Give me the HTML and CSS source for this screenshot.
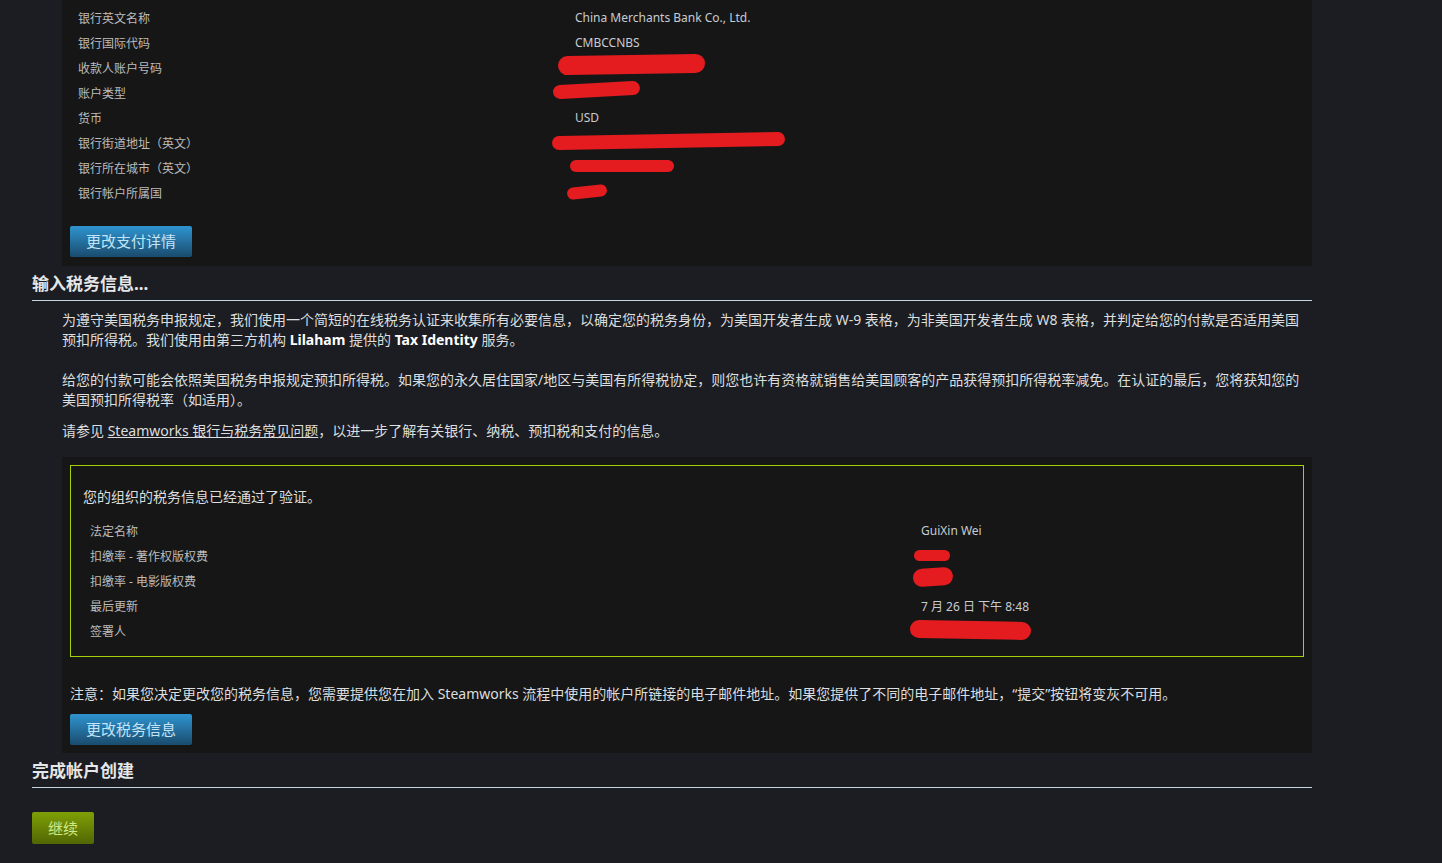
FILE: index.html
```html
<!DOCTYPE html>
<html lang="zh-CN">
<head>
    <meta charset="UTF-8">
    <meta name="viewport" content="width=device-width, initial-scale=1.0">
    <title>Steamworks 付款与税务信息</title>
    <link rel="stylesheet" href="styles.css">
</head>
<body>
    <div class="page">
        <div class="panel bank">
            <table class="details">
                <tr><td class="label">银行英文名称</td><td class="value">China Merchants Bank Co., Ltd.</td></tr>
                <tr><td class="label">银行国际代码</td><td class="value">CMBCCNBS</td></tr>
                <tr><td class="label">收款人账户号码</td><td class="value"><span class="redact r-account"></span></td></tr>
                <tr><td class="label">账户类型</td><td class="value"><span class="redact r-type"></span></td></tr>
                <tr><td class="label">货币</td><td class="value">USD</td></tr>
                <tr><td class="label">银行街道地址（英文）</td><td class="value"><span class="redact r-street"></span></td></tr>
                <tr><td class="label">银行所在城市（英文）</td><td class="value"><span class="redact r-city"></span></td></tr>
                <tr><td class="label">银行帐户所属国</td><td class="value"><span class="redact r-country"></span></td></tr>
            </table>
            <a class="btn btn-blue" href="#">更改支付详情</a>
        </div>

        <h2 class="section-title">输入税务信息...</h2>
        <div class="intro">
            <p class="gap-lg">为遵守美国税务申报规定，我们使用一个简短的在线税务认证来收集所有必要信息，以确定您的税务身份，为美国开发者生成 W-9 表格，为非美国开发者生成 W8 表格，并判定给您的付款是否适用美国预扣所得税。我们使用由第三方机构 <strong>Lilaham</strong> 提供的 <strong>Tax Identity</strong> 服务。</p>
            <p class="gap-sm">给您的付款可能会依照美国税务申报规定预扣所得税。如果您的永久居住国家/地区与美国有所得税协定，则您也许有资格就销售给美国顾客的产品获得预扣所得税率减免。在认证的最后，您将获知您的美国预扣所得税率（如适用）。</p>
            <p>请参见 <a href="#">Steamworks 银行与税务常见问题</a>，以进一步了解有关银行、纳税、预扣税和支付的信息。</p>
        </div>

        <div class="panel tax">
            <div class="verified">
                <p class="verified-title">您的组织的税务信息已经通过了验证。</p>
                <table class="details tax-details">
                    <tr><td class="label">法定名称</td><td class="value">GuiXin Wei</td></tr>
                    <tr><td class="label">扣缴率 - 著作权版权费</td><td class="value"><span class="redact r-rate1"></span></td></tr>
                    <tr><td class="label">扣缴率 - 电影版权费</td><td class="value"><span class="redact r-rate2"></span></td></tr>
                    <tr><td class="label">最后更新</td><td class="value">7 月 26 日 下午 8:48</td></tr>
                    <tr><td class="label">签署人</td><td class="value"><span class="redact r-signer"></span></td></tr>
                </table>
            </div>
            <p class="note">注意：如果您决定更改您的税务信息，您需要提供您在加入 Steamworks 流程中使用的帐户所链接的电子邮件地址。如果您提供了不同的电子邮件地址，“提交”按钮将变灰不可用。</p>
            <a class="btn btn-blue" href="#">更改税务信息</a>
        </div>

        <h2 class="section-title">完成帐户创建</h2>
        <a class="btn btn-green" href="#">继续</a>
    </div>
</body>
</html>
```

FILE: styles.css
```css
body {
    margin: 0;
    background: #1b1d22;
    color: #dcdedf;
    font-family: "Noto Sans", "Noto Sans CJK SC", sans-serif;
    font-size: 14px;
}
.page {
    width: 1280px;
    padding-left: 32px;
}
.panel {
    margin-left: 30px;
    background: #161616;
    padding: 8px;
}
.bank {
    padding-top: 5px;
    padding-bottom: 9px;
}

/* label / value rows */
.details {
    border-collapse: collapse;
    font-size: 12px;
}
.details td {
    height: 25px;
    padding: 0 8px;
    vertical-align: middle;
    white-space: nowrap;
}
.details .label {
    width: 481px;
    color: #bcbcbc;
}
.details .value {
    position: relative;
    color: #c6ccd2;
}
.tax-details td {
    padding: 0 7px;
}
.tax-details .label {
    width: 817px;
}

/* red marker scribbles over private values */
.redact {
    position: absolute;
    display: block;
    background: #e41c1f;
    border-radius: 10px;
}
.r-account { left: -9px; top: 0; width: 147px; height: 19px; transform: rotate(-1deg); }
.r-type { left: -14px; top: 3px; width: 87px; height: 14px; transform: rotate(-3deg); }
.r-street { left: -15px; top: 4px; width: 233px; height: 14px; transform: rotate(-1deg); }
.r-city { left: 3px; top: 5px; width: 104px; height: 12px; }
.r-country { left: 0; top: 6px; width: 40px; height: 12px; transform: rotate(-6deg); }
.r-rate1 { left: 0; top: 7px; width: 36px; height: 11px; }
.r-rate2 { left: -1px; top: 0; width: 40px; height: 18px; transform: rotate(-4deg); }
.r-signer { left: -4px; top: 3px; width: 121px; height: 18px; transform: rotate(1deg); }

.btn {
    display: block;
    width: max-content;
    padding: 0 16px;
    line-height: 31px;
    font-size: 15px;
    border-radius: 2px;
    text-decoration: none;
}
.btn-blue {
    margin-top: 21px;
    color: #c2e4f7;
    background: linear-gradient(to bottom, #2e91cc 5%, #1b4f72 95%);
}
.btn-green {
    margin-top: 24px;
    line-height: 32px;
    color: #d2e885;
    background: linear-gradient(to bottom, #7d9d06 5%, #536904 95%);
}

.section-title {
    margin: 0;
    padding: 6px 0 4px;
    font-size: 17px;
    line-height: 24px;
    font-weight: bold;
    color: #e4e6e8;
    border-bottom: 1px solid #c6d4df;
}

.intro {
    margin: 0 0 16px 30px;
    padding-top: 9px;
}
.intro p {
    margin: 0;
    line-height: 20px;
}
.intro .gap-lg {
    margin-bottom: 20px;
}
.intro .gap-sm {
    margin-bottom: 11px;
}
.intro strong {
    color: #ffffff;
}
.intro a {
    color: #dcdedf;
    text-decoration: underline;
}

.verified {
    border: 1px solid #a4d007;
    padding: 21px 12px 13px;
}
.verified-title {
    margin: 0 0 11px;
    line-height: 20px;
}
.note {
    margin: 27px 0 0;
    line-height: 20px;
}
.tax .btn-blue {
    margin-top: 10px;
}
```
